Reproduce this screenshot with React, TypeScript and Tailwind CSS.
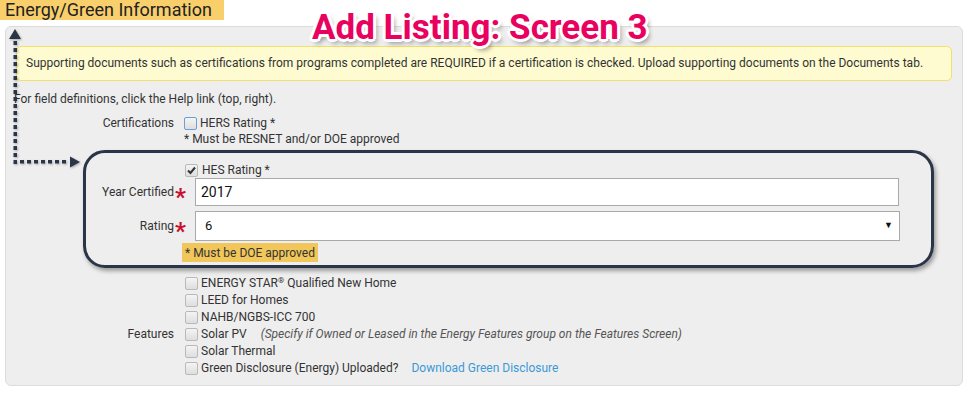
import React from "react";

function Box({ checked, focus }: { checked?: boolean; focus?: boolean }) {
  return (
    <span
      className={`relative inline-block h-[13px] w-[13px] shrink-0 rounded-[2px] border bg-gradient-to-b from-[#f4f4f4] to-[#dedede] ${
        focus ? "border-[#6aa0d8]" : "border-[#b9b9b9]"
      }`}
    >
      {checked && (
        <svg width="11" height="11" viewBox="0 0 11 11" className="absolute left-[0px] top-[0px]">
          <path d="M2 5.5 L4.5 8 L9 2.5" stroke="#333" strokeWidth="2" fill="none" />
        </svg>
      )}
    </span>
  );
}

function Check({ label, checked, focus, children }: { label: string; checked?: boolean; focus?: boolean; children?: React.ReactNode }) {
  return (
    <div className="flex h-[17px] items-center gap-[3px]">
      <Box checked={checked} focus={focus} />
      <span>{label}</span>
      {children}
    </div>
  );
}

function Star() {
  return (
    <span className="absolute left-full top-[1px] pl-[1px] text-[24px] font-bold leading-[24px] text-[#c8102e]">*</span>
  );
}

export default function App() {
  return (
    <div className="relative h-[397px] w-[969px] overflow-hidden bg-white font-['Roboto',sans-serif] text-[12px] text-[#333]">
      {/* Section header */}
      <div className="h-[20px] w-[224px] bg-[#f9cf6c] pl-[5px] text-[18px] leading-[20px] text-[#222]">
        Energy/Green Information
      </div>

      <div className="ml-[5px] mt-[6px] h-[360px] w-[958px] rounded-[6px] border border-[#dcdcdc] bg-[#eeeeee] pl-[10px]">
        <div className="mt-[19px] flex h-[35px] w-[936px] items-center rounded-[5px] border border-[#f1e06a] bg-[#fefbd1] pl-[9px] leading-[17px]">
          Supporting documents such as certifications from programs completed are REQUIRED if a certification is checked. Upload supporting documents on the Documents tab.
        </div>

        <div className="-ml-[2px] mt-[10px] leading-[17px]">For field definitions, click the Help link (top, right).</div>

        {/* Certifications */}
        <div className="mt-[8px] flex leading-[17px]">
          <div className="w-[158px] shrink-0 text-right leading-[15px]">Certifications</div>
          <div className="ml-[10px] flex flex-col">
            <div className="flex h-[15px] items-center gap-[3px]">
              <Box focus />
              <span>HERS Rating *</span>
            </div>
            <div className="h-[17px]">* Must be RESNET and/or DOE approved</div>
            <div className="mt-[15px] flex h-[15px] items-center gap-[4px] pl-[1px]">
              <Box checked />
              <span>HES Rating *</span>
            </div>
          </div>
        </div>

        <div className="flex h-[28px] items-center">
          <div className="relative w-[158px] shrink-0 text-right leading-[17px]">
            Year Certified
            <Star />
          </div>
          <div className="ml-[21px] flex h-[28px] w-[704px] items-center border border-[#a9a9a9] bg-white pl-[5px] text-[14px] text-[#111]">
            2017
          </div>
        </div>

        <div className="mt-[5px] flex h-[30px] items-center">
          <div className="relative w-[158px] shrink-0 text-right leading-[17px]">
            Rating
            <Star />
          </div>
          <div className="ml-[21px] flex h-[30px] w-[705px] items-center justify-between border border-[#a9a9a9] bg-white pl-[9px] pr-[6px] text-[13px] text-[#111]">
            <span>6</span>
            <span className="text-[9px] text-[#111]">▼</span>
          </div>
        </div>

        <div className="mt-[2px] flex">
          <div className="w-[166px] shrink-0" />
          <div className="flex h-[19px] items-center bg-[#f1c65a] px-[3px]">* Must be DOE approved</div>
        </div>

        {/* Features */}
        <div className="mt-[13px] flex leading-[17px]">
          <div className="w-[158px] shrink-0 pt-[51px] text-right">Features</div>
          <div className="ml-[10px] flex flex-col pl-[1px]">
            <Check label="ENERGY STAR">
              <span className="-ml-[3px]">
                <sup className="text-[8px]">®</sup> Qualified New Home
              </span>
            </Check>
            <Check label="LEED for Homes" />
            <Check label="NAHB/NGBS-ICC 700" />
            <Check label="Solar PV">
              <span className="ml-[11px] italic text-[#555]">
                (Specify if Owned or Leased in the Energy Features group on the Features Screen)
              </span>
            </Check>
            <Check label="Solar Thermal" />
            <Check label="Green Disclosure (Energy) Uploaded?">
              <span className="ml-[10px] text-[#3b99d8]">Download Green Disclosure</span>
            </Check>
          </div>
        </div>
      </div>

      {/* Annotation: highlight box */}
      <div className="absolute left-[83px] top-[150px] h-[118px] w-[851px] rounded-[22px] border-[3px] border-[#2a3548] shadow-[2px_3px_4px_rgba(0,0,0,0.35)]" />

      {/* Annotation: dotted arrow */}
      <svg className="absolute left-0 top-0" width="100" height="180" viewBox="0 0 100 180">
        <g fill="#2a3548" style={{ filter: "drop-shadow(1px 1px 1px rgba(0,0,0,0.3))" }}>
          <path d="M15 29 L21 39 L9 39 Z" />
          {Array.from({ length: 18 }).map((_, i) => (
            <rect key={"v" + i} x={13.5} y={41 + i * 7} width={3.5} height={4} />
          ))}
          {Array.from({ length: 7 }).map((_, i) => (
            <rect key={"h" + i} x={20 + i * 7} y={160} width={4} height={3.5} />
          ))}
          <path d="M80 162 L70 156.5 L70 167.5 Z" />
        </g>
      </svg>

      {/* Annotation: title */}
      <div className="absolute left-[312px] top-[10px] text-[35px] font-bold leading-[36px] text-[#e9015f] [text-shadow:-2px_-2px_0_#fff,2px_-2px_0_#fff,-2px_2px_0_#fff,2px_2px_0_#fff,0_-3px_0_#fff,0_3px_0_#fff,-3px_0_0_#fff,3px_0_0_#fff,3px_4px_5px_rgba(0,0,0,0.45)]">
        Add Listing: Screen 3
      </div>
    </div>
  );
}
